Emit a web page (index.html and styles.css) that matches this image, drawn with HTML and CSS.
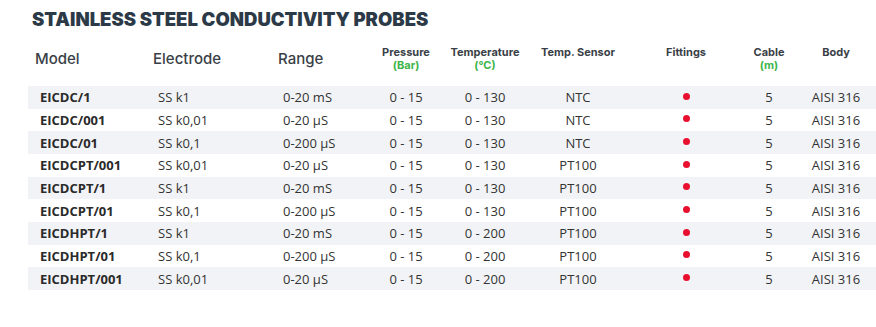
FILE: index.html
```html
<!DOCTYPE html>
<html>
<head>
<meta charset="utf-8">
<link rel="stylesheet" href="styles.css">
</head>
<body>
<div class="page">
  <h1 class="title">STAINLESS STEEL CONDUCTIVITY PROBES</h1>
  <div class="table">
    <div class="row head">
      <div class="c l big">Model</div>
      <div class="c l big">Electrode</div>
      <div class="c l big">Range</div>
      <div class="c m sm">Pressure<span class="unit">(Bar)</span></div>
      <div class="c m sm">Temperature<span class="unit">(°C)</span></div>
      <div class="c m sm">Temp. Sensor</div>
      <div class="c m sm">Fittings</div>
      <div class="c m sm">Cable<span class="unit">(m)</span></div>
      <div class="c m sm">Body</div>
    </div>
    <div class="row odd"><div class="c l b">EICDC/1</div><div class="c l">SS k1</div><div class="c l">0-20 mS</div><div class="c m">0 - 15</div><div class="c m">0 - 130</div><div class="c m">NTC</div><div class="c m f"><span class="dot"></span></div><div class="c m">5</div><div class="c m">AISI 316</div></div>
    <div class="row"><div class="c l b">EICDC/001</div><div class="c l">SS k0,01</div><div class="c l">0-20 µS</div><div class="c m">0 - 15</div><div class="c m">0 - 130</div><div class="c m">NTC</div><div class="c m f"><span class="dot"></span></div><div class="c m">5</div><div class="c m">AISI 316</div></div>
    <div class="row odd"><div class="c l b">EICDC/01</div><div class="c l">SS k0,1</div><div class="c l">0-200 µS</div><div class="c m">0 - 15</div><div class="c m">0 - 130</div><div class="c m">NTC</div><div class="c m f"><span class="dot"></span></div><div class="c m">5</div><div class="c m">AISI 316</div></div>
    <div class="row"><div class="c l b">EICDCPT/001</div><div class="c l">SS k0,01</div><div class="c l">0-20 µS</div><div class="c m">0 - 15</div><div class="c m">0 - 130</div><div class="c m">PT100</div><div class="c m f"><span class="dot"></span></div><div class="c m">5</div><div class="c m">AISI 316</div></div>
    <div class="row odd"><div class="c l b">EICDCPT/1</div><div class="c l">SS k1</div><div class="c l">0-20 mS</div><div class="c m">0 - 15</div><div class="c m">0 - 130</div><div class="c m">PT100</div><div class="c m f"><span class="dot"></span></div><div class="c m">5</div><div class="c m">AISI 316</div></div>
    <div class="row"><div class="c l b">EICDCPT/01</div><div class="c l">SS k0,1</div><div class="c l">0-200 µS</div><div class="c m">0 - 15</div><div class="c m">0 - 130</div><div class="c m">PT100</div><div class="c m f"><span class="dot"></span></div><div class="c m">5</div><div class="c m">AISI 316</div></div>
    <div class="row odd"><div class="c l b">EICDHPT/1</div><div class="c l">SS k1</div><div class="c l">0-20 mS</div><div class="c m">0 - 15</div><div class="c m">0 - 200</div><div class="c m">PT100</div><div class="c m f"><span class="dot"></span></div><div class="c m">5</div><div class="c m">AISI 316</div></div>
    <div class="row"><div class="c l b">EICDHPT/01</div><div class="c l">SS k0,1</div><div class="c l">0-200 µS</div><div class="c m">0 - 15</div><div class="c m">0 - 200</div><div class="c m">PT100</div><div class="c m f"><span class="dot"></span></div><div class="c m">5</div><div class="c m">AISI 316</div></div>
    <div class="row odd"><div class="c l b">EICDHPT/001</div><div class="c l">SS k0,01</div><div class="c l">0-20 µS</div><div class="c m">0 - 15</div><div class="c m">0 - 200</div><div class="c m">PT100</div><div class="c m f"><span class="dot"></span></div><div class="c m">5</div><div class="c m">AISI 316</div></div>
  </div>
</div>
</body>
</html>
```
FILE: styles.css
```css
html, body {
  margin: 0;
  padding: 0;
  background: #fff;
  overflow: hidden;
}
.page {
  padding: 7px 0 0 28px;
  width: 850px;
}
.title {
  margin: 0 0 0 4px;
  font-family: Inter, "DejaVu Sans", sans-serif;
  font-weight: 900;
  font-size: 18.5px;
  line-height: 24px;
  letter-spacing: 0;
  color: #2c3a47;
}
.table {
  margin-top: 13px;
  font-family: "Open Sans", "Noto Sans", sans-serif;
  font-size: 13px;
  color: #333;
}
.row {
  display: grid;
  grid-template-columns: 118px 125px 99px 72px 86px 100px 116px 50px 84px;
  height: 22.67px;
  align-items: center;
}
.row.odd {
  background: #f2f3f6;
}
.row.head {
  height: 42px;
  align-items: start;
  padding-top: 2px;
  box-sizing: border-box;
  color: #3a3f47;
}
.c.l {
  padding-left: 12px;
}
.c.m {
  text-align: center;
}
.c.f {
  display: flex;
  justify-content: center;
  align-items: center;
  margin-top: -2px;
}
.c.b {
  font-weight: 700;
  color: #2a2a2a;
}
.head .c.l {
  padding-left: 7px;
}
.big {
  font-family: Inter, "DejaVu Sans", sans-serif;
  font-size: 15px;
  font-weight: 500;
  line-height: 16px;
  padding-top: 5px;
}
.sm {
  font-family: Inter, "DejaVu Sans", sans-serif;
  font-size: 11px;
  font-weight: 700;
  line-height: 13px;
}
.unit {
  display: block;
  color: #3db54a;
}
.dot {
  display: block;
  width: 7px;
  height: 7px;
  border-radius: 50%;
  background: #e8102e;
}
```
